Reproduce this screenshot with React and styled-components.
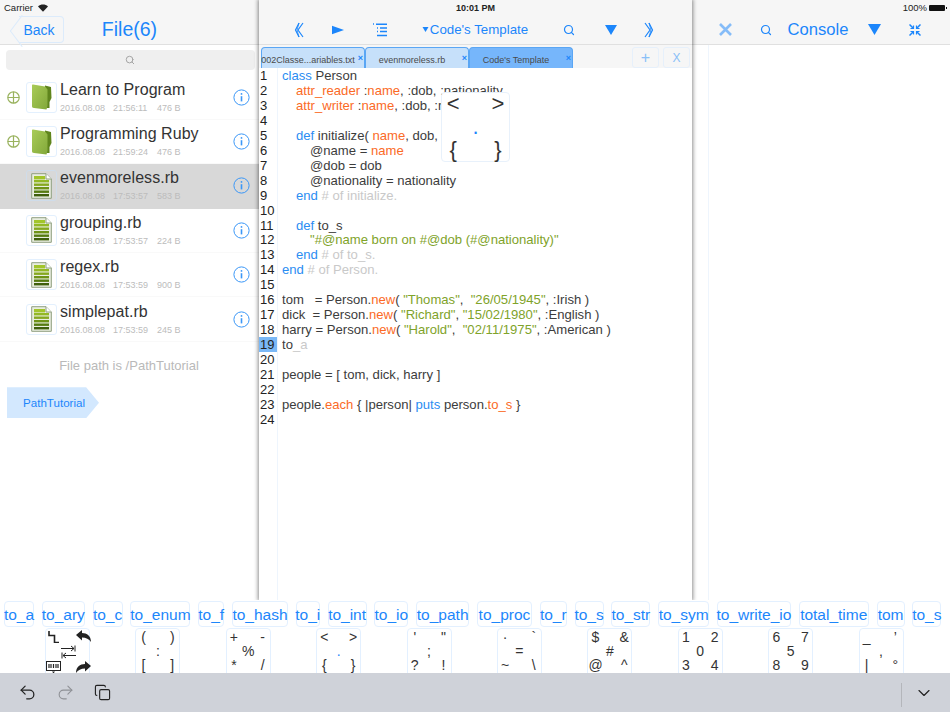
import React from 'react';
import styled, { createGlobalStyle } from 'styled-components';
import { Undo2, Redo2, Copy, ChevronDown, Search } from 'lucide-react';

const Global = createGlobalStyle`
  html, body { margin: 0; padding: 0; background: #fff; }
  body { font-family: "Liberation Sans", Arial, sans-serif; color: #333; }
  * { box-sizing: border-box; }
`;
const BLUE = '#1c86fb';

const Page = styled.div`
  position: relative; width: 950px; height: 712px; overflow: hidden; background: #fff;
  display: flex; flex-direction: column;
`;
const StatusBar = styled.div`
  position: absolute; top: 0; left: 0; right: 0; height: 15px; z-index: 5;
  display: grid; grid-template-columns: 1fr auto 1fr; align-items: center;
  padding: 0 4px; font-size: 9.5px; color: #222;
`;
const StatusLeft = styled.div`display: flex; align-items: center; gap: 5px;`;
const StatusClock = styled.div`font-weight: bold; font-size: 9px; padding-left: 1px;`;
const StatusRight = styled.div`display: flex; align-items: center; justify-content: flex-end; gap: 2px;`;
const Battery = styled.div`
  width: 16px; height: 6px; background: #111; border-radius: 1px; margin-right: 1px; position: relative;
  &::after { content: ''; position: absolute; right: -2px; top: 2px; width: 1px; height: 2px; background: #111; }
`;
const Panels = styled.div`display: flex; height: 600px; flex: none;`;
const Left = styled.section`width: 259px; flex: none; display: flex; flex-direction: column;`;
const Center = styled.section`
  width: 433px; flex: none; display: flex; flex-direction: column; position: relative; z-index: 2;
  box-shadow: 0 0 4px 1px rgba(0,0,0,.45); background: #fff;
`;
const Right = styled.section`flex: 1; display: flex; flex-direction: column;`;
const Header = styled.header`
  height: 45px; flex: none; background: #f6f6f6; border-bottom: 1px solid #e0e0e0; padding-top: 15px;
`;
const LeftHeader = styled(Header)`
  display: grid; grid-template-columns: 259px; align-items: center; position: relative;
`;
const BackButton = styled.div`
  position: absolute; left: 19px; top: 16px; width: 45px; height: 27px;
  border: 1px solid #dcebfb; border-left: none; border-radius: 0 4px 4px 0;
  color: ${BLUE}; font-size: 14px; display: flex; align-items: center; justify-content: center; padding-right: 4px;
  &::before {
    content: ''; position: absolute; left: -7px; top: 3.5px; width: 19px; height: 19px;
    border-left: 1px solid #dcebfb; border-bottom: 1px solid #dcebfb; transform: rotate(45deg) skew(8deg, 8deg);
  }
`;
const LeftTitle = styled.div`text-align: center; font-size: 19.5px; color: ${BLUE};`;
const CenterHeader = styled(Header)`
  display: grid; grid-template-columns: 21px 38px 40px 44px 146px 42px 42px 34px; align-items: center;
  color: ${BLUE};
`;
const RightHeader = styled(Header)`
  display: grid; grid-template-columns: 13px 40px 42px 62px 50px 32px; align-items: center;
  color: ${BLUE};
`;
const Slot = styled.div`
  grid-column: ${p => p.$col}; display: flex; align-items: center; justify-content: center; gap: 1px;
`;
const HeaderTitle = styled.span`font-size: ${p => p.$size || 13.3}px; white-space: nowrap;`;

const SearchWrap = styled.div`padding: 5px 4px 5.5px 6px; flex: none;`;
const SearchBox = styled.div`
  height: 20px; background: #efefef; border-radius: 4px; color: #a5a5a5;
  display: flex; align-items: center; justify-content: center; padding-right: 2px;
`;
const Row = styled.div`
  height: 44.4px; display: grid; grid-template-columns: 26px 32px 1fr 34px; align-items: center;
  background: ${p => p.$selected ? '#d8d8d8' : '#fff'};
  border-bottom: 1px solid ${p => p.$selected ? '#d8d8d8' : '#f9f9f9'};
`;
const PlusCell = styled.div`display: flex; justify-content: center; padding-left: 1px;`;
const IconBox = styled.div`
  width: 31px; height: 31px; border: 1px solid ${p => p.$selected ? '#cfdcea' : '#e3f0fe'}; border-radius: 3px;
  display: flex; align-items: center; justify-content: center;
`;
const RowText = styled.div`padding-left: 2px; min-width: 0; margin-top: -1px;`;
const RowTitle = styled.div`font-size: 16px; line-height: 19px; color: #333; white-space: nowrap; letter-spacing: .05px;`;
const Meta = styled.div`
  display: flex; margin-top: 4px; font-size: 9px; line-height: 11px; color: #bcbcbc; white-space: pre;
`;
const MetaCell = styled.span`width: ${p => p.$w}px; flex: none;`;
const InfoCell = styled.div`display: flex; justify-content: center; padding-right: 1px; color: #3b97f7;`;
const PathNote = styled.div`margin-top: 15px; padding-right: 1px; text-align: center; font-size: 13px; line-height: 18px; color: #b9b9b9;`;
const Crumb = styled.div`
  margin: 12.5px 0 0 7px; width: 92px; height: 31px; background: #d3e8fe; color: ${BLUE}; font-size: 11.6px;
  display: flex; align-items: center; padding-left: 16px;
  clip-path: polygon(0 0, 86% 0, 100% 50%, 86% 100%, 0 100%);
`;

const TabBar = styled.div`height: 23px; flex: none; background: #f6f6f6; display: flex; align-items: flex-end; padding-left: 2px; position: relative;`;
const Tab = styled.div`
  width: 104px; height: 21px; position: relative;
  background: ${p => p.$active ? '#76b6fb' : '#c6e0fa'};
  border: 1px solid #5aa6f4; border-bottom: none; border-radius: 4px 4px 0 0;
  font-size: 9px; color: #4a4a4a; display: flex; align-items: center; justify-content: center; padding: 3px 10px 0 0; white-space: nowrap;
`;
const TabClose = styled.span`position: absolute; right: 1px; top: 5px; color: ${BLUE}; font-size: 9px; font-weight: bold;`;
const TabAction = styled.div`
  position: absolute; top: 2px; left: ${p => p.$x}px; width: ${p => p.$w}px; height: 21px; border: 1px solid #e6f0fb; border-radius: 3px;
  color: #8ac0f8; font-size: ${p => p.$size}px; display: flex; align-items: center; justify-content: center;
`;
const Editor = styled.div`flex: 1; position: relative; overflow: hidden; background: #fff; padding-top: 0;`;
const Gutter = styled.div`position: absolute; left: 18px; top: 0; bottom: 0; width: 1px; background: #eef5fd;`;
const Line = styled.div`
  display: grid; grid-template-columns: 23px 1fr; height: 14.96px; line-height: 15px; font-size: 13.1px; white-space: pre; color: #3c3c3c;
`;
const LineNo = styled.div`
  width: 19px; color: #222; padding-left: 1px; font-size: 13px; background: ${p => p.$on ? '#7ab8f6' : 'transparent'};
`;
const Code = styled.div`padding-left: ${p => (p.$indent || 0) * 14}px; overflow: hidden;`;
const Kw = styled.span`color: #2b8df2;`;
const Or = styled.span`color: #fb6a26;`;
const Gr = styled.span`color: #7fa32a;`;
const Cm = styled.span`color: #c9c9c9;`;
const Popup = styled.div`
  position: absolute; left: 182px; top: 24px; width: 69px; height: 70px; background: #fff; border: 1px solid #e8f1fb; border-radius: 4px;
`;
const Grid3 = styled.div`
  display: grid; grid-template-columns: 1fr 1fr 1fr; grid-template-rows: 1fr 1fr 1fr; justify-items: center; align-items: center;
  width: 100%; height: 100%;
`;
const Glyph = styled.span`
  grid-column: ${p => p.$c}; grid-row: ${p => p.$r}; line-height: 1; color: ${p => p.$blue ? BLUE : '#333'};
  font-size: ${p => p.$size || 14}px;
`;
const ConsoleBody = styled.div`flex: 1; margin-left: 16px; border-left: 1px solid #eef5fd;`;

const Suggestions = styled.div`
  height: 28px; flex: none; display: flex; gap: 7.8px; padding: 1px 0 0 4px; background: #fff; position: relative; z-index: 3;
`;
const Chip = styled.div`
  width: ${p => p.$w}px; flex: none; height: 26px; border: 1px solid #e3f0ff; border-radius: 4px; color: ${BLUE};
  font-size: 15.5px; display: flex; align-items: center; justify-content: center; white-space: nowrap; overflow: visible; padding-top: 1px;
`;
const KeyRow = styled.div`
  height: 45px; flex: none; display: flex; gap: 45.4px; padding-left: 45px; background: #fff; overflow: hidden;
`;
const Key = styled.div`
  width: 45px; height: 51px; flex: none; border: 1px solid #e3f0ff; border-radius: 4px; padding: 1px 0 6px;
`;
const Toolbar = styled.footer`
  flex: 1; background: #cfd2d9; display: flex; align-items: center; padding: 0 16px 0 18px; color: #222; gap: 19px;
`;
const ToolIcon = styled.div`display: flex; color: ${p => p.$dim ? '#8f9196' : '#222'};`;
const Divider = styled.div`margin-left: auto; width: 1px; height: 24px; background: #b4b6bb; margin-right: -7px; margin-top: 5px;`;

const Chevrons = ({ right }) => (
  <svg width="10" height="16" viewBox="0 0 10 16" fill="none" stroke={BLUE} strokeWidth="1.2" style={right ? { transform: 'scaleX(-1)' } : undefined}>
    <path d="M5 1 1.5 8 5 15M9 1 4 8 9 15" />
    <path d="M5 1 3 8 5 15" strokeWidth=".8" />
  </svg>
);
const Play = () => <svg width="12" height="10" viewBox="0 0 12 10"><path d="M0 .8 12 5 0 9.2z" fill={BLUE} /></svg>;
const ListIcon = () => (
  <svg width="16" height="14" viewBox="0 0 16 14" fill="none" stroke={BLUE}>
    <path d="M1 1h1M4 1.2h11M5 5h1M8 5h7M5 8.5h1M8 8.5h7M5 12.5h10" strokeWidth="1.6" />
  </svg>
);
const Tri = ({ w = 12, h = 10 }) => <svg width={w} height={h} viewBox="0 0 12 10"><path d="M0 0h12L6 10z" fill={BLUE} /></svg>;
const Cross = () => <svg width="13" height="13" viewBox="0 0 13 13"><path d="M1 1l11 11M12 1 1 12" stroke="#85bcf8" strokeWidth="2.6" /></svg>;
const Shrink = () => (
  <svg width="12" height="12" viewBox="0 0 12 12" fill="none" stroke={BLUE} strokeWidth="1.5">
    <path d="M0.5 .5 4.5 4.5M11.5 .5 7.5 4.5M.5 11.5 4.5 7.5M11.5 11.5 7.5 7.5" />
    <path d="M1.5 4.5h3v-3M10.5 4.5h-3v-3M1.5 7.5h3v3M10.5 7.5h-3v3" strokeWidth="1.2" />
  </svg>
);
const SearchI = ({ size = 12, color }) => <Search size={size} strokeWidth={2.4} color={color} />;
const PlusCircle = () => (
  <svg width="13" height="13" viewBox="0 0 13 13" fill="none" stroke="#9ab35f" strokeWidth="1.2">
    <circle cx="6.5" cy="6.5" r="5.7" /><path d="M.8 6.5h11.4M6.5.8v11.4" />
  </svg>
);
const Info = () => (
  <svg width="17" height="17" viewBox="0 0 17 17" fill="none" stroke="currentColor">
    <circle cx="8.5" cy="8.5" r="7.6" />
    <path d="M8.5 7.2v5.2" strokeWidth="1.6" /><circle cx="8.5" cy="4.9" r=".9" fill="currentColor" stroke="none" />
  </svg>
);
const Folder = () => (
  <svg width="21" height="26" viewBox="0 0 21 26">
    <defs>
      <linearGradient id="fg" x1="0" y1="0" x2="1" y2="1"><stop offset="0" stopColor="#a9cc58" /><stop offset="1" stopColor="#82a83a" /></linearGradient>
    </defs>
    <path d="M14 1.5 20 3 20.5 14 18.5 18 18.5 24 14 24Z" fill="#5f851d" />
    <path d="M2 .5 14 2.5 16.5 5.5 16.5 22 15.5 25.5 3 24C1.5 24 1 23 1 22L1 1.5C1 .8 1.3 .5 2 .5Z" fill="url(#fg)" />
  </svg>
);
const Doc = () => (
  <svg width="21" height="26" viewBox="0 0 21 26">
    <path d="M.7.7H15L20.3 6V25.3H.7Z" fill="#e9eee0" stroke="#8f9f80" />
    <path d="M15 .7V6H20.3" fill="#fff" stroke="#8f9f80" />
    {[['#a2c52b', 3], ['#93b825', 7], ['#86a81f', 10.5], ['#6f9317', 14], ['#557a10', 17.5], ['#3f5f0c', 21]].map(([c, y], i) => (
      <rect key={i} x="3" y={y} width={i === 0 ? 11 : 15} height={i === 0 ? 3.4 : 2.4} fill={c} />
    ))}
  </svg>
);
const Wifi = () => (
  <svg width="10" height="8" viewBox="0 0 11 8"><path d="M5.5 8 0 2.4C3 -.5 8 -.5 11 2.4Z" fill="#222" /></svg>
);
const Tl = () => <svg width="12" height="12" viewBox="0 0 12 12" fill="none" stroke="#222" strokeWidth="1.6"><path d="M1 0v4.5h5.5V11.5H11" /></svg>;
const Curve = ({ flip }) => (
  <svg width="15" height="13" viewBox="0 0 15 13" style={flip ? { transform: 'scaleX(-1)' } : undefined}>
    <path d="M0 5 6 0V3C11 3 15 6 15 12C13 9 10 7.5 6 7.5V10.5Z" fill="#222" />
  </svg>
);
const TabArrows = () => (
  <svg width="15" height="14" viewBox="0 0 15 14" fill="none" stroke="#222" strokeWidth="1">
    <path d="M0 3.5h13M10 1l3 2.5-3 2.5M14 .5v6M15 10.5H2M5 8 2 10.5 5 13M1 7.5v6" />
  </svg>
);
const KbIcon = () => (
  <svg width="15" height="13" viewBox="0 0 15 13" fill="none" stroke="#222">
    <rect x=".5" y=".5" width="14" height="9" /><path d="M3 3v4M5 3v4M7.5 3v4M10 3v4M12 3v4" strokeWidth="1.2" />
    <path d="M6 10.5h3L7.5 12.5z" fill="#222" stroke="none" />
  </svg>
);

const files = [
  { name: 'Learn to Program', time: '21:56:11', size: '476 B', folder: true },
  { name: 'Programming Ruby', time: '21:59:24', size: '476 B', folder: true },
  { name: 'evenmoreless.rb', time: '17:53:57', size: '583 B', selected: true },
  { name: 'grouping.rb', time: '17:53:57', size: '224 B' },
  { name: 'regex.rb', time: '17:53:59', size: '900 B' },
  { name: 'simplepat.rb', time: '17:53:59', size: '245 B' },
];

const code = [
  [0, <><Kw>class</Kw> Person</>],
  [1, <><Or>attr_reader</Or> :<Or>name</Or>, :dob, :nationality</>],
  [1, <><Or>attr_writer</Or> :<Or>name</Or>, :dob, :nationality</>],
  [0, ''],
  [1, <><Kw>def</Kw> initialize( <Or>name</Or>, dob, nationality )</>],
  [2, <>@name = <Or>name</Or></>],
  [2, '@dob = dob'],
  [2, '@nationality = nationality'],
  [1, <><Kw>end</Kw> <Cm># of initialize.</Cm></>],
  [0, ''],
  [1, <><Kw>def</Kw> to_s</>],
  [2, <Gr>"#@name born on #@dob (#@nationality)"</Gr>],
  [1, <><Kw>end</Kw> <Cm># of to_s.</Cm></>],
  [0, <><Kw>end</Kw> <Cm># of Person.</Cm></>],
  [0, ''],
  [0, <>tom   = Person.<Or>new</Or>( <Gr>"Thomas"</Gr>,  <Gr>"26/05/1945"</Gr>, :Irish )</>],
  [0, <>dick  = Person.<Or>new</Or>( <Gr>"Richard"</Gr>, <Gr>"15/02/1980"</Gr>, :English )</>],
  [0, <>harry = Person.<Or>new</Or>( <Gr>"Harold"</Gr>,  <Gr>"02/11/1975"</Gr>, :American )</>],
  [0, <>to<Cm>_a</Cm></>],
  [0, ''],
  [0, 'people = [ tom, dick, harry ]'],
  [0, ''],
  [0, <>people.<Or>each</Or> {'{'} |person| <Kw>puts</Kw> person.<Or>to_s</Or> {'}'}</>],
  [0, ''],
];

const chips = [['to_a', 30], ['to_ary', 43], ['to_c', 30], ['to_enum', 60], ['to_f', 26], ['to_hash', 56], ['to_i', 24], ['to_int', 39], ['to_io', 34], ['to_path', 53], ['to_proc', 55], ['to_r', 27], ['to_s', 29], ['to_str', 39], ['to_sym', 51], ['to_write_io', 74], ['total_time', 70], ['tom', 28], ['to_s', 29]];

const keys = [
  ['(', ')', ':', '[', ']'],
  ['+', '-', '%', '*', '/'],
  ['<', '>', '.', '{', '}'],
  ["'", '"', ';', '?', '!'],
  ['·', '`', '=', '~', '\\'],
  ['$', '&', '#', '@', '^'],
  ['1', '2', '0', '3', '4'],
  ['6', '7', '5', '8', '9'],
  ['_', '’', ',', '|', '°'],
];

const Corners = ({ items, size, blueCenter }) => (
  <Grid3>
    <Glyph $c={1} $r={1} $size={size}>{items[0]}</Glyph>
    <Glyph $c={3} $r={1} $size={size}>{items[1]}</Glyph>
    <Glyph $c={2} $r={2} $size={size} $blue={blueCenter}>{items[2]}</Glyph>
    <Glyph $c={1} $r={3} $size={size}>{items[3]}</Glyph>
    <Glyph $c={3} $r={3} $size={size}>{items[4]}</Glyph>
  </Grid3>
);

export default function App() {
  return (
    <Page>
      <Global />
      <StatusBar>
        <StatusLeft>Carrier <Wifi /></StatusLeft>
        <StatusClock>10:01 PM</StatusClock>
        <StatusRight>100% <Battery /></StatusRight>
      </StatusBar>
      <Panels>
        <Left>
          <LeftHeader>
            <BackButton>Back</BackButton>
            <LeftTitle>File(6)</LeftTitle>
          </LeftHeader>
          <SearchWrap><SearchBox><SearchI size={10} color="#a5a5a5" /></SearchBox></SearchWrap>
          {files.map(f => (
            <Row key={f.name} $selected={f.selected}>
              <PlusCell>{f.folder && <PlusCircle />}</PlusCell>
              <IconBox $selected={f.selected}>{f.folder ? <Folder /> : <Doc />}</IconBox>
              <RowText>
                <RowTitle>{f.name}</RowTitle>
                <Meta><MetaCell $w={53}>2016.08.08</MetaCell><MetaCell $w={44}>{f.time}</MetaCell><span>{f.size}</span></Meta>
              </RowText>
              <InfoCell><Info /></InfoCell>
            </Row>
          ))}
          <PathNote>File path is /PathTutorial</PathNote>
          <Crumb>PathTutorial</Crumb>
        </Left>
        <Center>
          <CenterHeader>
            <Slot $col={2}><Chevrons /></Slot>
            <Slot $col={3}><Play /></Slot>
            <Slot $col={4}><ListIcon /></Slot>
            <Slot $col={5}><Tri w={7} h={5} /><HeaderTitle>Code's Template</HeaderTitle></Slot>
            <Slot $col={6}><SearchI /></Slot>
            <Slot $col={7}><Tri /></Slot>
            <Slot $col={8}><Chevrons right /></Slot>
          </CenterHeader>
          <TabBar>
            <Tab>002Classe...ariables.txt<TabClose>×</TabClose></Tab>
            <Tab>evenmoreless.rb<TabClose>×</TabClose></Tab>
            <Tab $active>Code's Template<TabClose>×</TabClose></Tab>
            <TabAction $x={373} $w={27} $size={16}>+</TabAction>
            <TabAction $x={404} $w={27} $size={12}>X</TabAction>
          </TabBar>
          <Editor>
            <Gutter />
            {code.map(([indent, content], i) => (
              <Line key={i}>
                <LineNo $on={i === 18}>{i + 1}</LineNo>
                <Code $indent={indent}>{content}</Code>
              </Line>
            ))}
            <Popup><Corners items={['<', '>', '.', '{', '}']} size={22} blueCenter /></Popup>
          </Editor>
        </Center>
        <Right>
          <RightHeader>
            <Slot $col={2}><Cross /></Slot>
            <Slot $col={3}><SearchI /></Slot>
            <Slot $col={4}><HeaderTitle $size={16.6}>Console</HeaderTitle></Slot>
            <Slot $col={5}><Tri w={13} h={11} /></Slot>
            <Slot $col={6}><Shrink /></Slot>
          </RightHeader>
          <ConsoleBody />
        </Right>
      </Panels>
      <Suggestions>
        {chips.map(([t, w], i) => <Chip key={i} $w={w}>{t}</Chip>)}
      </Suggestions>
      <KeyRow>
        <Key>
          <Grid3>
            <Glyph $c={1} $r={1}><Tl /></Glyph>
            <Glyph $c={3} $r={1}><Curve /></Glyph>
            <Glyph $c={2} $r={2}><TabArrows /></Glyph>
            <Glyph $c={1} $r={3}><KbIcon /></Glyph>
            <Glyph $c={3} $r={3}><Curve flip /></Glyph>
          </Grid3>
        </Key>
        {keys.map((k, i) => (
          <Key key={i}><Corners items={k} blueCenter={k[2] === '.'} /></Key>
        ))}
      </KeyRow>
      <Toolbar>
        <ToolIcon><Undo2 size={19} strokeWidth={1.6} /></ToolIcon>
        <ToolIcon $dim><Redo2 size={19} strokeWidth={1.4} /></ToolIcon>
        <ToolIcon><Copy size={17} strokeWidth={1.6} /></ToolIcon>
        <Divider />
        <ToolIcon><ChevronDown size={20} strokeWidth={1.4} /></ToolIcon>
      </Toolbar>
    </Page>
  );
}
